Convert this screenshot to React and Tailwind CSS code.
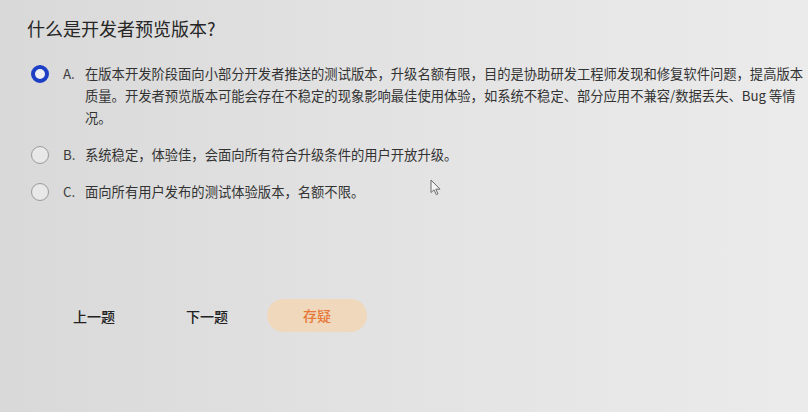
import React, { useState } from 'react';

const options = [
  {
    key: 'A',
    text: '在版本开发阶段面向小部分开发者推送的测试版本，升级名额有限，目的是协助研发工程师发现和修复软件问题，提高版本质量。开发者预览版本可能会存在不稳定的现象影响最佳使用体验，如系统不稳定、部分应用不兼容/数据丢失、Bug 等情况。',
  },
  { key: 'B', text: '系统稳定，体验佳，会面向所有符合升级条件的用户开放升级。' },
  { key: 'C', text: '面向所有用户发布的测试体验版本，名额不限。' },
];

const Radio = ({ checked }) =>
  checked ? (
    <span className="mt-[2px] block h-[18px] w-[18px] shrink-0 rounded-full border-[4px] border-[#1c3fc4] bg-[#eef0f4]" />
  ) : (
    <span className="mt-[2px] block h-[18px] w-[18px] shrink-0 rounded-full border-[1.5px] border-[#9b9b9b] bg-[#e8e8e8]" />
  );

export default function App() {
  const [selected, setSelected] = useState('A');

  return (
    <div
      className="relative h-[412px] w-[808px] overflow-hidden bg-gradient-to-r from-[#d9d9d9] via-[#e3e3e3] to-[#ebebeb] pl-[27px] pt-[15px] text-[#2b2b2b]"
      style={{ fontFamily: '"Noto Sans CJK SC", "Noto Sans", sans-serif' }}
    >
      <h1 className="text-[18px] leading-[26px] font-normal text-[#262626]">什么是开发者预览版本?</h1>

      <div className="mt-[22px] flex flex-col gap-[15px]">
        {options.map((o) => (
          <div
            key={o.key}
            className="flex cursor-pointer items-start pl-[4px]"
            onClick={() => setSelected(o.key)}
          >
            <Radio checked={selected === o.key} />
            <span className="ml-[14px] w-[22px] shrink-0 text-[13.3px] leading-[22px] text-[#3a3a3a]">{o.key}.</span>
            <p className="w-[724px] text-[13.3px] leading-[22px] text-[#333]">{o.text}</p>
          </div>
        ))}
      </div>

      <div className="mt-[96px] flex items-center pl-[46px]">
        <button className="w-[42px] text-[14px] font-medium leading-[20px] text-[#222]">上一题</button>
        <button className="ml-[71px] w-[42px] text-[14px] font-medium leading-[20px] text-[#222]">下一题</button>
        <button className="ml-[39px] h-[33px] w-[100px] rounded-full bg-[#efd8bb] text-[14px] font-medium text-[#e8783a]">
          存疑
        </button>
      </div>

      {/* mouse pointer seen in the screenshot */}
      <svg className="absolute left-[430px] top-[179px]" width="12" height="17" viewBox="0 0 12 17">
        <path d="M1 1 L1 13.5 L4 10.8 L6.3 15.6 L8 14.8 L5.8 10.2 L10 10.2 Z" fill="#f4f4f4" stroke="#6a6a6a" strokeWidth="1" strokeLinejoin="round" />
      </svg>
    </div>
  );
}
